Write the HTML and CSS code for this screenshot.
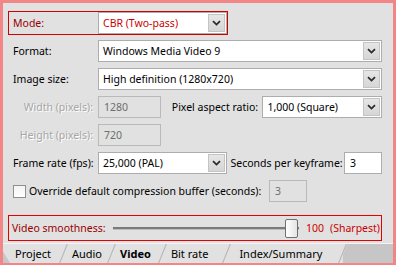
FILE: index.html
```html
<!DOCTYPE html>
<html lang="en">
<head>
    <meta charset="UTF-8">
    <title>Video settings</title>
    <link rel="stylesheet" href="styles.css">
</head>
<body>
    <div class="window">
        <div class="panel">
            <div class="row mode-box">
                <span class="label label-red">Mode:</span>
                <div class="select select-mode">
                    <span class="value value-red">CBR (Two-pass)</span>
                    <span class="arrow"><svg width="9" height="6" viewBox="0 0 9 6"><path d="M1 1.2 L4.5 4.6 L8 1.2" fill="none" stroke="#2b2b2b" stroke-width="1.8"/></svg></span>
                </div>
            </div>

            <div class="row">
                <span class="label">Format:</span>
                <div class="select select-wide">
                    <span class="value">Windows Media Video 9</span>
                    <span class="arrow"><svg width="9" height="6" viewBox="0 0 9 6"><path d="M1 1.2 L4.5 4.6 L8 1.2" fill="none" stroke="#2b2b2b" stroke-width="1.8"/></svg></span>
                </div>
            </div>

            <div class="row">
                <span class="label">Image size:</span>
                <div class="select select-wide">
                    <span class="value">High definition (1280x720)</span>
                    <span class="arrow"><svg width="9" height="6" viewBox="0 0 9 6"><path d="M1 1.2 L4.5 4.6 L8 1.2" fill="none" stroke="#2b2b2b" stroke-width="1.8"/></svg></span>
                </div>
            </div>

            <div class="row">
                <span class="label label-off">Width (pixels):</span>
                <div class="input input-off input-size">1280</div>
                <span class="label-inline">Pixel aspect ratio:</span>
                <div class="select select-aspect">
                    <span class="value">1,000 (Square)</span>
                    <span class="arrow"><svg width="9" height="6" viewBox="0 0 9 6"><path d="M1 1.2 L4.5 4.6 L8 1.2" fill="none" stroke="#2b2b2b" stroke-width="1.8"/></svg></span>
                </div>
            </div>

            <div class="row">
                <span class="label label-off">Height (pixels):</span>
                <div class="input input-off input-size">720</div>
            </div>

            <div class="row">
                <span class="label">Frame rate (fps):</span>
                <div class="select select-rate">
                    <span class="value">25,000 (PAL)</span>
                    <span class="arrow"><svg width="9" height="6" viewBox="0 0 9 6"><path d="M1 1.2 L4.5 4.6 L8 1.2" fill="none" stroke="#2b2b2b" stroke-width="1.8"/></svg></span>
                </div>
                <span class="label-keyframe">Seconds per keyframe:</span>
                <div class="input input-key">3</div>
            </div>

            <div class="row row-check">
                <span class="checkbox"></span>
                <span class="check-text">Override default compression buffer (seconds):</span>
                <div class="input input-off input-buffer">3</div>
            </div>

            <div class="smooth-box">
                <span class="label-red smooth-label">Video smoothness:</span>
                <div class="slider">
                    <div class="track"></div>
                    <div class="thumb"></div>
                </div>
                <span class="value-red smooth-value">100</span>
                <span class="value-red smooth-note">(Sharpest)</span>
            </div>
        </div>

        <div class="tabs">
            <div class="tab-corner"></div>
            <div class="tab tab-project">Project</div>
            <div class="tab tab-audio">Audio</div>
            <div class="tab tab-video active">Video</div>
            <div class="tab tab-bitrate">Bit rate</div>
            <div class="tab tab-index">Index/Summary</div>
            <div class="tab-rest"></div>
        </div>
    </div>
</body>
</html>
```

FILE: styles.css
```css
html, body {
    margin: 0;
    padding: 0;
}
body {
    font-family: "Noto Sans", sans-serif;
    font-size: 10.5px;
    color: #000;
    background-color: #e1e1e1;
}
.window {
    width: 396px;
    height: 265px;
    box-sizing: border-box;
    border: 3px solid #f28686;
    border-bottom-width: 2px;
    background-color: #e1e1e1;
    display: flex;
    flex-direction: column;
    overflow: hidden;
}
.panel {
    padding: 8px 11px 0 5px;
    height: 238px;
    flex: none;
    box-sizing: border-box;
}
.row {
    display: flex;
    align-items: center;
    height: 22px;
    padding-left: 5px;
    margin-bottom: 6px;
}
.label {
    width: 85px;
    flex: none;
    line-height: 22px;
    white-space: nowrap;
}
.label-red {
    color: #990000;
}
.value-red {
    color: #cc0000;
}
.label-off {
    color: #a6a6a6;
    text-shadow: 1px 1px 0 #ffffff;
    text-align: right;
    width: 80px;
    margin-right: 5px;
}
.mode-box {
    width: 220px;
    height: 24px;
    box-sizing: border-box;
    border: 1px solid #d40000;
    padding-left: 4px;
    margin-bottom: 5px;
}

/* dropdowns */
.select {
    display: flex;
    align-items: stretch;
    height: 22px;
    box-sizing: border-box;
    border: 1px solid #adadad;
    background-color: #fff;
}
.select .value {
    flex: 1;
    padding-left: 4px;
    line-height: 20px;
    white-space: nowrap;
    overflow: hidden;
}
.select .arrow {
    width: 17px;
    margin: 1px;
    box-sizing: border-box;
    border: 1px solid #c4c4c4;
    background: linear-gradient(#e6e6e6, #d6d6d6);
    display: flex;
    align-items: center;
    justify-content: center;
}
.select-mode {
    width: 130px;
}
.select-wide {
    width: 284px;
}
.select-aspect {
    width: 120px;
}
.select-rate {
    width: 129px;
}

/* text inputs */
.input {
    height: 22px;
    box-sizing: border-box;
    border: 1px solid #adadad;
    background-color: #fff;
    line-height: 20px;
    padding-left: 5px;
}
.input-off {
    background-color: #e1e1e1;
    border-color: #b9b9b9;
    color: #6d6d6d;
}
.input-size {
    width: 63px;
}
.label-inline {
    margin-left: 11px;
    width: 91px;
    white-space: nowrap;
}
.label-keyframe {
    margin-left: 4px;
    width: 114px;
    white-space: nowrap;
}
.input-key {
    width: 38px;
}
.row-check {
    margin-top: 1px;
}
.checkbox {
    width: 13px;
    height: 13px;
    box-sizing: border-box;
    border: 1px solid #8f8f8f;
    background: linear-gradient(#f4f4f4, #ffffff);
    margin-right: 3px;
}
.check-text {
    width: 240px;
    white-space: nowrap;
}
.input-buffer {
    width: 38px;
}

/* slider box */
.smooth-box {
    display: flex;
    align-items: center;
    height: 26px;
    box-sizing: border-box;
    border: 1px solid #e60000;
    margin-top: 13px;
    padding-left: 3px;
}
.smooth-label {
    width: 101px;
}
.slider {
    position: relative;
    width: 186px;
    height: 20px;
}
.track {
    position: absolute;
    left: 0;
    right: 0;
    top: 9px;
    height: 2px;
    background-color: #7b7b7b;
    border-bottom: 1px solid #bdbdbd;
}
.thumb {
    position: absolute;
    left: 172px;
    top: 1px;
    width: 13px;
    height: 19px;
    box-sizing: border-box;
    border: 1px solid #6f6f6f;
    border-radius: 2px;
    background: linear-gradient(90deg, #ffffff, #e4e4e4);
}
.smooth-value {
    margin-left: 7px;
}
.smooth-note {
    margin-left: 6px;
}

/* tab strip */
.tabs {
    flex: 1;
    display: flex;
    align-items: stretch;
    border-top: 1px solid #f4f4f4;
    margin-top: 2px;
}
.tab-corner {
    width: 7px;
    background-color: #c6c6c6;
    clip-path: polygon(0 40%, 100% 100%, 0 100%);
}
.tab {
    position: relative;
    line-height: 19px;
    font-size: 11px;
    white-space: nowrap;
}
.tab::after {
    content: '';
    position: absolute;
    top: 0;
    bottom: 0;
    right: 0;
    border-right: 1px solid #b0b0b0;
    transform: skewX(-22deg);
}
.tab-project {
    padding: 0 13px 0 5px;
}
.tab-audio {
    padding: 0 10px 0 8px;
}
.tab-video {
    padding: 0 12px 0 8px;
    font-weight: bold;
}
.tab-bitrate {
    padding: 0 19px 0 8px;
}
.tab-index {
    padding: 0 21px 0 12px;
}
.tab-rest {
    flex: 1;
    background-color: #c6c6c6;
    clip-path: polygon(4px 0, 100% 0, 100% 100%, -4px 100%);
}
```
